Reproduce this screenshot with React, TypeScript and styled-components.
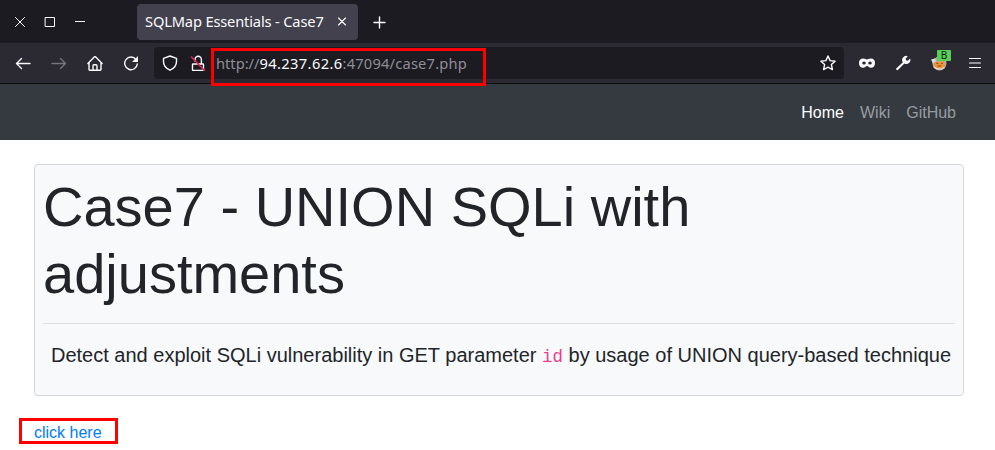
import React from "react";
import styled, { createGlobalStyle } from "styled-components";

const Global = createGlobalStyle`
  *, *::before, *::after { box-sizing: border-box; }
  body { margin: 0; background: #fff; color: #212529; overflow: hidden;
    font: 400 16px/1.5 "Liberation Sans", Arial, sans-serif; }
`;

const Window = styled.div`
  height: 450px;
  overflow: hidden;
`;

const TabBar = styled.div`
  display: flex;
  align-items: center;
  height: 43px;
  background: #1c1b22;
  color: #fbfbfe;
`;

const WindowButtons = styled.div`
  display: flex;
  width: 137px;
  padding-left: 12px;
  gap: 14px;
`;

const Icon = styled.svg<{ $dim?: boolean }>`
  display: block;
  flex: none;
  width: 16px;
  height: 16px;
  fill: none;
  stroke: ${(p) => (p.$dim ? "#76757c" : "#fbfbfe")};
  stroke-width: 1.4;
  stroke-linecap: round;
  stroke-linejoin: round;
`;

const Tab = styled.div`
  display: flex;
  align-items: center;
  justify-content: space-between;
  width: 221px;
  height: 36px;
  margin-right: 13px;
  padding: 0 8px;
  border-radius: 4px;
  background: #42414d;
  font: 14.67px/20px "Noto Sans", sans-serif;
  letter-spacing: -0.16px;
  white-space: nowrap;
`;

const TabTitle = styled.span`
  position: relative;
  top: -1px;
`;

const Toolbar = styled.div`
  display: flex;
  align-items: center;
  height: 41px;
  padding: 0 12px 0 15px;
  background: #2b2a33;
  border-bottom: 1px solid #0c0c0d;
`;

const NavButtons = styled.div`
  display: flex;
  gap: 20px;
  width: 139px;
`;

const AddressBar = styled.div`
  display: flex;
  align-items: center;
  width: 690px;
  height: 32px;
  padding: 0 8px;
  border-radius: 4px;
  background: #1c1b22;
`;

const SiteIcons = styled.div`
  display: flex;
  gap: 12px;
  width: 54px;
`;

const Url = styled.div`
  position: relative;
  flex: 1;
  color: #8f8f96;
  font: 14.67px/20px "Noto Sans", sans-serif;
`;

const Host = styled.span`
  color: #fbfbfe;
  letter-spacing: 0.38px;
`;

const Path = styled.span`
  letter-spacing: 0.2px;
`;

const Marker = styled.div<{ $x: number; $y: number; $w: number; $h: number }>`
  position: absolute;
  left: ${(p) => p.$x}px;
  top: ${(p) => p.$y}px;
  width: ${(p) => p.$w}px;
  height: ${(p) => p.$h}px;
  border: 3px solid #f00;
  pointer-events: none;
  z-index: 1;
`;

const Extensions = styled.div`
  display: flex;
  flex: 1;
  justify-content: space-between;
  padding-left: 15px;
`;

const Profile = styled.div`
  position: relative;
`;

const Badge = styled.span`
  position: absolute;
  left: 6px;
  top: -5px;
  width: 14px;
  height: 11px;
  border-radius: 1px;
  background: #5bcd5b;
  color: #10240f;
  font: 10px/11px "Noto Sans", sans-serif;
  text-align: center;
`;

const SiteNav = styled.nav`
  display: flex;
  align-items: center;
  justify-content: flex-end;
  gap: 16px;
  height: 56px;
  padding: 2px 39px 0;
  background: #343a40;
`;

const NavLink = styled.a<{ $active?: boolean }>`
  color: ${(p) => (p.$active ? "#fff" : "#999c9f")};
`;

const Content = styled.main`
  padding: 24px 31px 0 34px;
`;

const Card = styled.section`
  padding: 8px;
  border: 1px solid #d4d6d8;
  border-radius: 4px;
  background: #f8f9fa;
`;

const Title = styled.h1`
  margin: 0 0 8px;
  font-size: 56px;
  font-weight: 400;
  line-height: 1.2;
`;

const Rule = styled.hr`
  margin: 16px 0;
  border: 0;
  border-top: 1px solid #dfe0e1;
`;

const Description = styled.p`
  margin: 0 0 16px;
  padding-left: 8px;
  font-size: 20px;
  white-space: nowrap;
`;

const Code = styled.code`
  color: #e83e8c;
  font-family: "Liberation Mono", monospace;
  font-size: 87.5%;
`;

const LinkLine = styled.div`
  position: relative;
  margin-top: 25px;
`;

const Link = styled.a`
  color: #007bff;
`;

export default function App() {
  return (
    <Window>
      <Global />
      <TabBar>
        <WindowButtons>
          <Icon><path strokeWidth="1" d="M3.500 3.500l9 9m0-9l-9 9" /></Icon>
          <Icon><path strokeWidth="1" strokeLinejoin="miter" d="M3.500 3.500h9v9h-9z" /></Icon>
          <Icon><path strokeWidth="1" strokeLinecap="butt" d="M3 7.500h10" /></Icon>
        </WindowButtons>
        <Tab>
          <TabTitle>SQLMap Essentials - Case7</TabTitle>
          <Icon><path strokeWidth="1.100" d="M4.500 4l7 7m0-7l-7 7" /></Icon>
        </Tab>
        <Icon><path d="M8.500 3v11M3 8.500h11" /></Icon>
      </TabBar>
      <Toolbar>
        <NavButtons>
          <Icon><path d="M15 8.500H1.500M6.500 3.500l-5 5 5 5" /></Icon>
          <Icon $dim><path d="M1 8.500h13.500M9.500 3.500l5 5-5 5" /></Icon>
          <Icon><path d="M.9 8.500L7.500 1.800h1L15.100 8.500M2 7.500v7q0 .7.7.7h10.600q.7 0 .7-.7v-7M6 15v-4.200a1 1 0 0 1 1-1h2a1 1 0 0 1 1 1V15" /></Icon>
          <Icon><path d="M13 4.500A6.300 6.300 0 1 0 14.300 9" /><path fill="#fbfbfe" stroke="none" d="M15 1v6H9z" /></Icon>
        </NavButtons>
        <AddressBar>
          <SiteIcons>
            <Icon><path d="M8 1l6.500 2.300v3.200c0 4-2.500 7-6.500 8.700-4-1.700-6.500-4.700-6.500-8.700V3.300z" /></Icon>
            <Icon>
              <path d="M3.200 9h9.600q.7 0 .7.7v5q0 .7-.7.7H3.200q-.7 0-.7-.7v-5q0-.7.700-.7zM5 6V4.500a3.200 3.200 0 0 1 6.400 0V9" />
              <path stroke="#e22850" strokeWidth="1.600" d="M1.500 2l13 13.500" />
            </Icon>
          </SiteIcons>
          <Url>
            http://<Host>94.237.62.6</Host><Path>:47094/case7.php</Path>
            <Marker $x={-5} $y={-5} $w={275} $h={38} />
          </Url>
          <Icon><path d="M8 1l2.100 4.600 5 .6-3.700 3.400 1 5L8 12.200l-4.400 2.400 1-5L.9 6.200l5-.6z" /></Icon>
        </AddressBar>
        <Extensions>
          <Icon><path fill="#fbfbfe" stroke="none" fillRule="evenodd" d="M0 8C0 5 1.500 3.500 4.200 3.500c2 0 2.700 1 3.800 1s1.800-1 3.800-1C14.500 3.500 16 5 16 8s-1.500 4.700-4 4.700c-2.200 0-3-1.700-4-1.700s-1.800 1.700-4 1.700C1.500 12.700 0 11 0 8zM3.200 8a1.800 1.500 0 1 0 3.600 0 1.800 1.500 0 1 0-3.600 0zM9.200 8a1.800 1.500 0 1 0 3.600 0 1.800 1.500 0 1 0-3.600 0z" /></Icon>
          <Icon><path stroke="none" fill="#fbfbfe" d="M1.200 13.500l6.700-6.200A4 4 0 0 1 12.800 1.300L10.700 3.600l.3 1.700 1.900.4 2.200-2.100a4 4 0 0 1-5.700 4.900l-6.500 6.500a1.200 1.200 0 0 1-1.700-1.500z" /></Icon>
          <Profile>
            <Icon>
              <circle cx="8.500" cy="8.500" r="7" fill="#b8aaa0" stroke="none" />
              <path fill="#d9e1e3" stroke="none" d="M0 4.500l4-1 1 3-3 2z" />
              <path fill="#f09433" stroke="none" d="M3.500 6.500l4 .8 5.500-1.300 1 5-3 2.500H6l-3-3z" />
              <path stroke="#eadbce" strokeWidth="1.200" d="M3 12q5 4 10 .5" />
              <path stroke="#80502a" strokeWidth="1" d="M5.500 8.300h1.500M10.500 8.300h1M7 11h3" />
            </Icon>
            <Badge>B</Badge>
          </Profile>
          <Icon><path strokeWidth="1.100" d="M2.500 3.500h11M2.500 8h11M2.500 12.500h11" /></Icon>
        </Extensions>
      </Toolbar>
      <SiteNav>
        <NavLink $active>Home</NavLink>
        <NavLink>Wiki</NavLink>
        <NavLink>GitHub</NavLink>
      </SiteNav>
      <Content>
        <Card>
          <Title>Case7 - UNION SQLi with adjustments</Title>
          <Rule />
          <Description>
            Detect and exploit SQLi vulnerability in GET parameter <Code>id</Code> by usage of UNION query-based technique
          </Description>
        </Card>
        <LinkLine>
          <Link>click here</Link>
          <Marker $x={-15} $y={-3} $w={99} $h={26} />
        </LinkLine>
      </Content>
    </Window>
  );
}
